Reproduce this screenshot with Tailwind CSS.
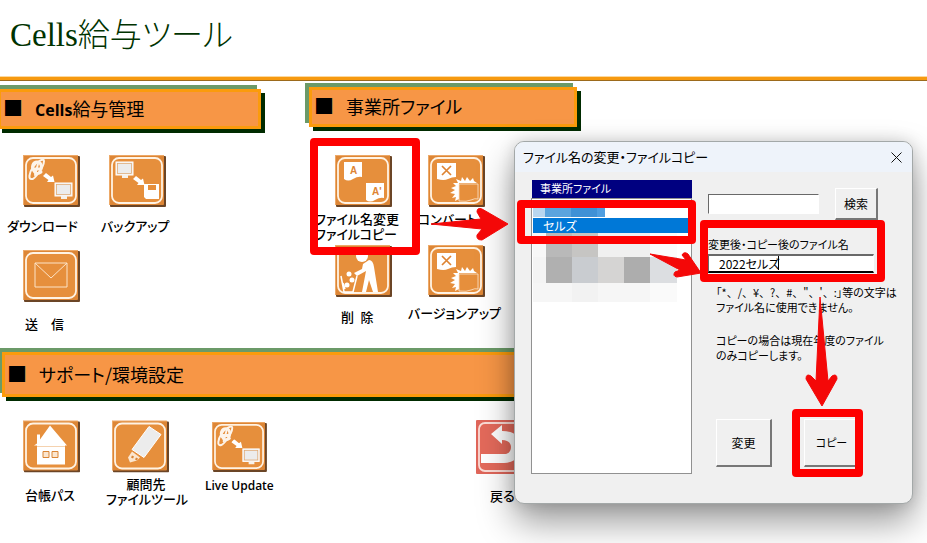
<!DOCTYPE html>
<html lang="ja">
<head>
    <meta charset="UTF-8">
    <title>Cells給与ツール</title>
    <meta name="viewport" content="width=device-width, initial-scale=1.0">
    <script src="https://cdn.jsdelivr.net/npm/@tailwindcss/browser@4"></script>
</head>
<body class="bg-white text-black font-['Noto_Sans_CJK_JP',sans-serif] [font-feature-settings:'palt']">

<!-- ICONS -->
<svg class="hidden">
    <symbol id="tile" viewBox="0 0 57 52">
        <rect x="1" y="1" width="56" height="51" rx="1" fill="#6b4526"/>
        <rect width="55" height="50" rx="1" fill="#dd8636"/>
        <path d="M0 .5H55M.5 0V50" stroke="#eda968"/>
        <rect x="3" y="3" width="50" height="45" rx="7" fill="#e68f3c" stroke="#fff3e4" stroke-width="1.8"/>
    </symbol>
    <symbol id="globe" viewBox="0 0 20 24">
        <g fill="none" stroke="#fdf4ea" stroke-linecap="round">
            <path d="M4 21C0 22 1 15 5 9S16 0 16 3 13 12 9 17 4 21 4 21" stroke-width="2"/>
            <path d="M6 13C3 9 5 4 9 4s5 4 4 7H6C6 15 9 17 13 14" stroke-width="3"/>
            <path d="M10 6L7 17" stroke-width="2"/>
        </g>
    </symbol>
    <symbol id="move" viewBox="0 0 12 10">
        <path d="M3 0L8 4 10 2.500 11.500 9 4 9 5.500 7 0 3Z" fill="#fff"/>
    </symbol>
    <symbol id="screen" viewBox="0 0 20 18">
        <rect x="1" y="1" width="17" height="13" fill="#ececec" stroke="#fff"/>
        <rect x="2.500" y="2.500" width="14" height="10" fill="none" stroke="#e0a56c" stroke-width=".7"/>
        <path d="M7 14h6v3H7z" fill="#f6f1ea"/>
    </symbol>
    <symbol id="convert" viewBox="0 0 57 52">
        <path d="M9 8H28V22Q24 22 20 24T9 24Z" fill="#fff"/>
        <path d="M14 11L23 20M23 11L14 20" stroke="#de8433" stroke-width="1.7"/>
        <path d="M49 28L46 26 45 23 42 26 39 22 37 26 34 22 33 26 28 24 30 28 25 28 28 31 23 33 27 35 22 38 27 39 24 43 28 42 27 46 31 44 31 28Z" fill="#fff"/>
        <path d="M31 29H50V44Q47 43 43 45T31 46Z" fill="#e68f3c" stroke="#fbe6cf" stroke-width=".8"/>
    </symbol>
    <symbol id="download" viewBox="0 0 57 52">
        <use href="#tile"/>
        <use href="#globe" x="5" y="3" width="20" height="24"/>
        <use href="#move" x="20" y="18" width="12" height="10"/>
        <use href="#screen" x="31" y="27" width="20" height="18"/>
    </symbol>
</svg>

<div class="relative min-h-screen overflow-hidden">

    <!-- HEADER -->
    <header class="flex h-[76px] items-center pb-2.5 pl-2.5">
        <h1 class="whitespace-nowrap text-[32px] leading-10 font-light text-[#003300]"><span class="font-['Liberation_Serif',serif] text-[33px] font-normal">Cells</span>給与ツール</h1>
    </header>
    <div class="h-[5px] border-t border-b border-t-[#fbd9a0] border-b-[#9c6a1c] bg-[#f79a10]"></div>

    <main>
        <div class="flex gap-12">
            <!-- PAYROLL -->
            <section class="w-[261px] shrink-0 pt-2">
                <h2 class="-ml-0.5 flex h-10 items-center gap-3 border-3 border-[#fb9b0c] bg-[#f79646] pb-0.5 pl-0.5 text-lg shadow-[-4px_-4px_0_#6b9a68,4px_4px_0_#002b00]">
                    <span class="text-xl">■</span>
                    <span><b class="font-['Open_Sans',sans-serif] text-base">Cells</b>給与管理</span>
                </h2>
                <div class="grid grid-cols-[94px_94px] gap-y-4 pt-6.5 pl-[7px] text-[13px] leading-4 font-medium">
                    <button class="text-left">
                        <svg class="ml-4 h-13 w-[57px]"><use href="#download"/></svg>
                        <span class="block pt-[11px]">ダウンロード</span>
                    </button>
                    <button class="text-left">
                        <svg class="ml-2 h-13 w-[57px]" viewBox="0 0 57 52">
                            <use href="#tile"/>
                            <use href="#screen" x="6" y="6" width="20" height="18"/>
                            <use href="#move" x="24" y="21" width="12" height="10"/>
                            <path d="M35 29H50V44H37L35 42Z" fill="#fff"/>
                            <path d="M39 30h8v5h-8z" fill="#e68f3c"/>
                        </svg>
                        <span class="block pt-[11px]">バックアップ</span>
                    </button>
                    <button class="text-left">
                        <svg class="ml-4 h-13 w-[57px]" viewBox="0 0 57 52">
                            <use href="#tile"/>
                            <path d="M12 13H44V37H12ZM12 13L28 28 44 13" fill="none" stroke="#fce3c7"/>
                        </svg>
                        <span class="block pt-3.5 pl-4.5">送　信</span>
                    </button>
                </div>
            </section>

            <!-- OFFICE FILES -->
            <section class="w-[268px] shrink-0 pt-1.5">
                <h2 class="flex h-10 items-center gap-3 border-3 border-[#fb9b0c] bg-[#f79646] pb-0.5 pl-0.5 text-lg shadow-[-4px_-4px_0_#6b9a68,4px_4px_0_#002b00]">
                    <span class="text-xl">■</span>
                    <span>事業所ファイル</span>
                </h2>
                <div class="grid grid-cols-[93px_104px] gap-y-1 pt-7 pl-1.5 text-[13px] leading-[15px] font-medium">
                    <button class="text-left">
                        <svg class="ml-5 h-13 w-[57px]" viewBox="0 0 57 52">
                            <use href="#tile"/>
                            <path d="M9 7H27V22Q23 21 18 24T9 24Z" fill="#fff"/>
                            <path d="M31 28H49V43Q45 42 40 45T31 45Z" fill="#fff"/>
                            <g class="font-['Liberation_Sans',sans-serif] text-[10px] font-bold" fill="#de8433">
                                <text x="15" y="19">A</text>
                                <text x="37" y="40">A'</text>
                            </g>
                        </svg>
                        <span class="block pt-1 whitespace-nowrap">ファイル名変更<br>ファイルコピー</span>
                    </button>
                    <button class="flex flex-col items-start text-left">
                        <svg class="ml-5 h-13 w-[57px]"><use href="#tile"/><use href="#convert"/></svg>
                        <span class="block pt-1 pl-2.5">コンバート</span>
                    </button>
                    <button class="text-left">
                        <svg class="ml-5 h-13 w-[57px]" viewBox="0 0 57 52">
                            <use href="#tile"/>
                            <circle cx="27" cy="11" r="6" fill="#fff"/>
                            <path d="M28 19L34 15Q38 15 39 22L43 47H38L34 35 31 47H27L31 26 22 31 19 28 27 24Z" fill="#fff"/>
                            <path d="M6 31L9 47H18L22 31M8 38L10 44" fill="none" stroke="#fff" stroke-width="1.5"/>
                            <g fill="#fff"><circle cx="14" cy="29" r="2.500"/><circle cx="17" cy="35" r="2.500"/><circle cx="12" cy="40" r="2.500"/></g>
                        </svg>
                        <span class="block pt-3 pl-[26px]">削&ensp;除</span>
                    </button>
                    <button class="flex flex-col items-start text-left">
                        <svg class="ml-5 h-13 w-[57px]"><use href="#tile"/><use href="#convert"/></svg>
                        <span class="block pt-2 whitespace-nowrap">バージョンアップ</span>
                    </button>
                </div>
            </section>
        </div>

        <!-- SUPPORT -->
        <section class="pt-5">
            <h2 class="ml-0.5 flex h-[45px] w-3/4 items-center gap-3 border-3 border-[#fb9b0c] bg-[#f79646] pb-0.5 pl-0.5 text-lg shadow-[-4px_-4px_0_#6b9a68,4px_4px_0_#002b00]">
                <span class="text-xl">■</span>
                <span>サポート/環境設定</span>
            </h2>
            <div class="flex items-start pt-[23px] pl-[23px] text-[13px] leading-[15px] font-medium">
                <button class="w-[83px] text-left">
                    <svg class="h-[53px] w-[57px]" viewBox="0 0 57 52">
                        <use href="#tile"/>
                        <path d="M11 25L14 23V14H17V19L27 5 44 25H42V44H14V25Z" fill="#fff"/>
                        <path d="M14 26H42" stroke="#f3c79b" stroke-width=".8"/>
                        <path d="M20 31h6v6h-6zM29 31h6v6h-6z" fill="#fbe6cf" stroke="#d98535"/>
                    </svg>
                    <span class="block pt-3.5 pl-0.5">台帳パス</span>
                </button>
                <button class="w-[99px] text-left">
                    <svg class="ml-1.5 h-[53px] w-[57px]" viewBox="0 0 57 52">
                        <use href="#tile"/>
                        <path d="M37 6L49 14 32 37 20 29Z" fill="#ececec" stroke="#fff"/>
                        <path d="M20 31L28 37 25 40 18 42 16 37Z" fill="#fbe6cf"/>
                        <path d="M20 35l2 1-1 2-2-1zM24 37l2 1-1 2-2-1z" fill="#d98535"/>
                    </svg>
                    <span class="block w-20 pt-[3px] text-center whitespace-nowrap">顧問先<br>ファイルツール</span>
                </button>
                <button class="w-[271px] pt-0.5 text-left">
                    <svg class="ml-1.5 h-[50px] w-[57px]"><use href="#download"/></svg>
                    <span class="block pt-1.5 font-['Open_Sans','Noto_Sans_CJK_JP',sans-serif] text-xs font-semibold">Live Update</span>
                </button>
                <button class="text-left">
                    <svg class="h-[54px] w-[57px]" viewBox="0 0 57 54">
                        <rect width="57" height="54" rx="1" fill="#e0665a"/>
                        <rect x="3" y="3" width="51" height="48" rx="6" fill="#e46a5b" stroke="#fbdcd6" stroke-width="1.800"/>
                        <path d="M15 14L26 5V11C39 11 45 17 45 26S39 43 28 43H5V34H28C33 34 35 31 35 27S32 20 26 20V24Z" fill="#fff"/>
                    </svg>
                    <span class="block pt-3.5 pl-3.5">戻る</span>
                </button>
            </div>
        </section>
    </main>

    <!-- DIALOG -->
    <div role="dialog" aria-labelledby="dialogTitle" class="absolute top-[141px] left-[514px] w-[399px] overflow-hidden rounded-[10px] border border-[#a3a8a8] bg-[#f0f0f0] text-[11px] shadow-[0_18px_36px_rgba(0,0,0,0.4),0_0_16px_rgba(0,0,0,0.15)]">
        <div class="flex h-[30px] items-center justify-between bg-[#eef3fa] pr-2.5 pl-2">
            <h2 id="dialogTitle" class="text-[13px] leading-5">ファイル名の変更・ファイルコピー</h2>
            <button aria-label="閉じる"><svg class="size-[11px]" viewBox="0 0 11 11"><path d="M.5.5L10.500 10.500M10.500.5L.5 10.500" stroke="#111" fill="none"/></svg></button>
        </div>
        <div class="flex pt-2 pb-[29px] pl-4">
            <div class="w-[161px]">
                <div class="ml-px h-[18px] bg-[#000080] pl-2 leading-4 text-white">事業所ファイル</div>
                <div class="h-[276px] border border-[#919191] bg-white px-px pt-[9px]">
                    <div class="flex h-[10px] pb-px">
                        <i class="w-3 bg-[#b8d6ef]"></i><i class="w-[26px] bg-[#5ba4de]"></i><i class="w-[26px] bg-[#3f91d6]"></i><i class="w-2 bg-[#4f9ee0]"></i>
                    </div>
                    <div class="h-[15px] bg-[#0078d7] pl-2.5 text-xs leading-[15px] text-white">セルズ</div>
                    <div class="flex h-6">
                        <i class="w-[13px] bg-[#f7f7f7]"></i><i class="w-[26px] bg-[#b9b9b9]"></i><i class="w-[26px] bg-[#c6c5c3]"></i><i class="w-[52px] bg-[#f0f0f0]"></i><i class="w-[27px] bg-[#fbfbfb]"></i>
                    </div>
                    <div class="flex h-[26px]">
                        <i class="w-[13px] bg-[#f4f4f4]"></i><i class="w-[26px] bg-[#b0b0b0]"></i><i class="w-[26px] bg-[#c9ccd0]"></i><i class="w-[26px] bg-[#d5d4d3]"></i><i class="w-[26px] bg-[#adadad]"></i><i class="w-[27px] bg-[#dcdee1]"></i>
                    </div>
                    <div class="flex h-[19px]">
                        <i class="w-[39px] bg-[#f6f6f6]"></i><i class="w-[26px] bg-[#f2f2f2]"></i><i class="w-[52px] bg-[#f6f6f6]"></i><i class="w-[27px] bg-[#fafafa]"></i>
                    </div>
                </div>
            </div>
            <div class="flex-1 pt-2 pl-4">
                <div class="flex items-center gap-4">
                    <input aria-label="検索" class="h-5 w-[111px] border border-t-[#696969] border-r-white border-b-white border-l-[#696969] bg-white px-1">
                    <button class="h-8 w-[43px] border border-t-white border-r-2 border-r-[#777] border-b-2 border-b-[#777] border-l-white text-xs">検索</button>
                </div>
                <label for="newName" class="block pt-4 leading-4">変更後・コピー後のファイル名</label>
                <input id="newName" value="2022セルズ" class="mt-0.5 block h-[19px] w-[166px] border border-t-2 border-t-[#696969] border-r-white border-b-2 border-b-black border-l-[#696969] bg-white pl-2.5 text-xs leading-4">
                <div class="pt-3 pl-2 leading-[15px]">
                    <p>「<span class="[font-feature-settings:normal]">*、/、¥、?、#、"、'、:</span>」等の文字は<br>ファイル名に使用できません。</p>
                    <p class="pt-[18px]">コピーの場合は現在年度のファイル<br>のみコピーします。</p>
                </div>
                <div class="flex gap-8 pt-14 pl-2 text-xs">
                    <button class="h-12 w-14 border border-t-white border-r-2 border-r-[#777] border-b-2 border-b-[#777] border-l-white">変更</button>
                    <button class="h-12 w-14 border border-t-white border-r-2 border-r-[#777] border-b-2 border-b-[#777] border-l-white text-[11px]">コピー</button>
                </div>
            </div>
        </div>
    </div>

    <!-- STEP MARKS -->
    <svg class="pointer-events-none absolute top-0 left-0 h-[543px] w-[927px]" viewBox="0 0 927 543">
        <path d="M778.500 256V270" stroke="#000"/>
        <g fill="none" stroke="#fe0000" stroke-width="8" stroke-linejoin="round">
            <rect x="314" y="142" width="102" height="109"/>
            <rect x="521" y="204" width="171" height="36"/>
            <rect x="704" y="224" width="177" height="54"/>
            <rect x="796" y="413" width="63" height="60"/>
        </g>
        <g fill="#f40808" stroke="#f40808" stroke-linejoin="round">
            <path d="M431 224L481 219 477 212Q477 207 482 209L508 224 482 240Q476 240 477 235L482 229Z"/>
            <path d="M650 254L686 260 682 255Q684 251 688 254L701 273 677 277Q672 276 675 272L680 270Z"/>
            <path d="M820 297L828 381 832 376Q837 373 837 379L822 406 806 379Q806 373 811 376L816 381Z"/>
        </g>
    </svg>
</div>

</body>
</html>
